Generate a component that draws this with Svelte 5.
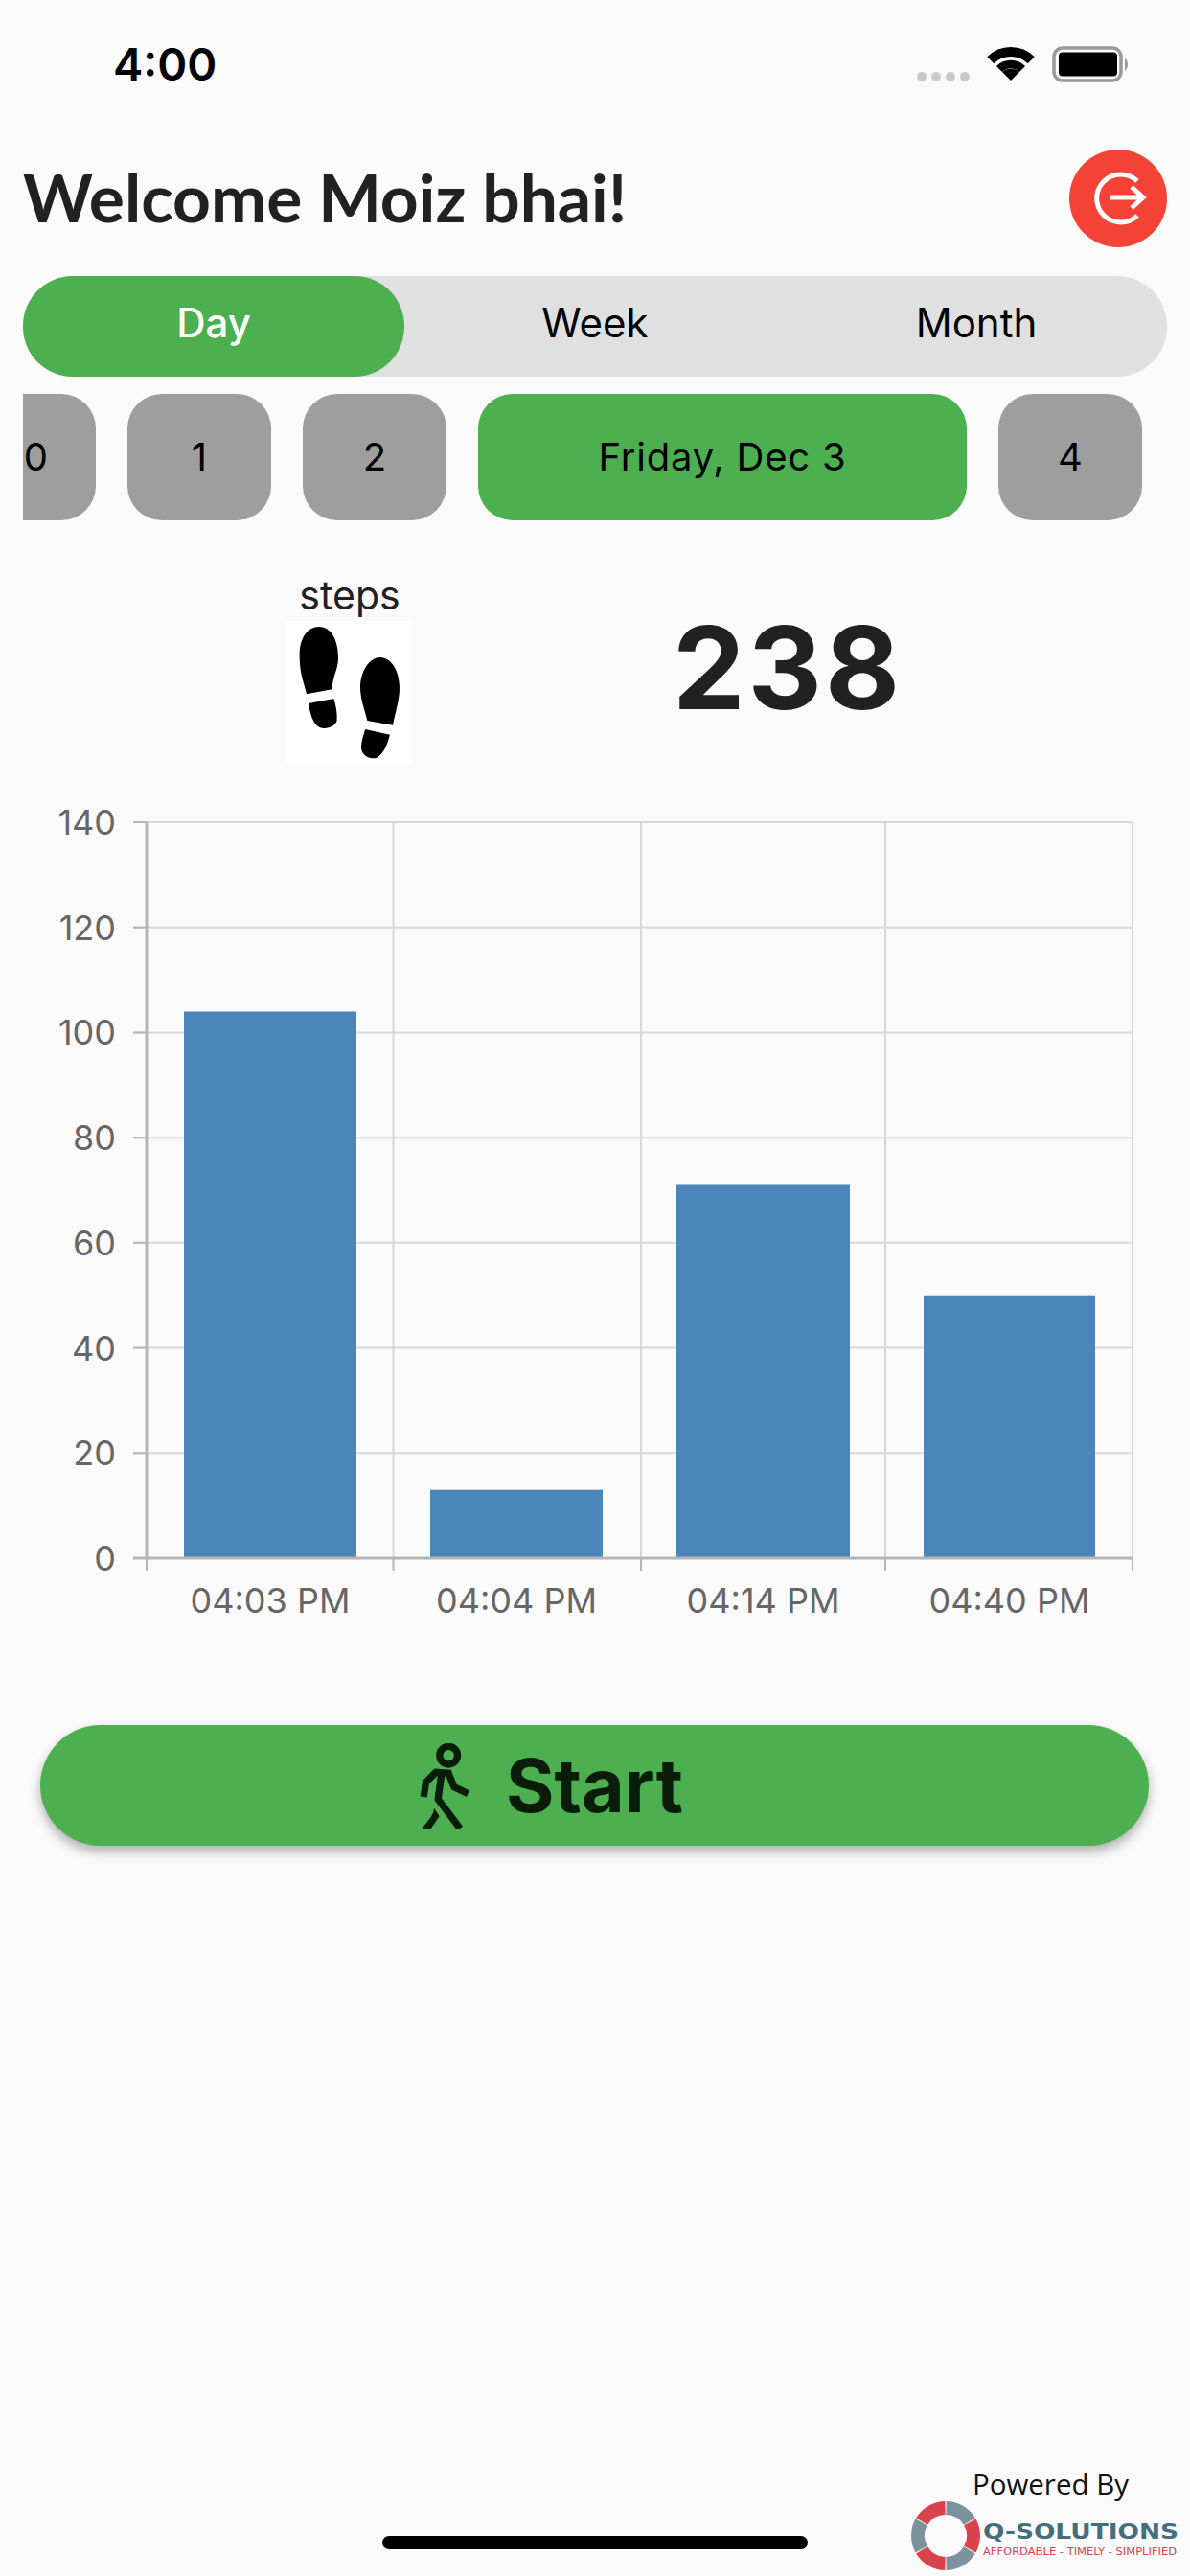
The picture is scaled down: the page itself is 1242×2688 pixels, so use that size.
<script>
	const tabs = ["Day", "Week", "Month"]
	const days = [
		{ label: "30" },
		{ label: "1" },
		{ label: "2" },
		{ label: "Friday, Dec 3", active: true },
		{ label: "4" }
	]

	// chart geometry, in page pixels
	const rightX = 1182
	const topY = 858
	const zeroY = 1626
	const maxVal = 140
	const yTicks = [0, 20, 40, 60, 80, 100, 120, 140]
	const xLines = [153, 410.5, 669, 924, 1182]
	const bars = [
		{ label: "04:03 PM", value: 104, x: 192, w: 180 },
		{ label: "04:04 PM", value: 13, x: 449, w: 180 },
		{ label: "04:14 PM", value: 71, x: 706, w: 181 },
		{ label: "04:40 PM", value: 50, x: 964, w: 179 }
	]
	const yPos = (v) => zeroY - (v / maxVal) * (zeroY - topY)

	// logo ring pieces
	const ringC = [987, 2646]
	const polar = (r, deg) => {
		const a = ((deg - 90) * Math.PI) / 180
		return [ringC[0] + r * Math.cos(a), ringC[1] + r * Math.sin(a)]
	}
	const ringPiece = (from, to) => {
		const [x1, y1] = polar(29, from)
		const [x2, y2] = polar(29, to)
		return `M${x1} ${y1}A29 29 0 0 1 ${x2} ${y2}`
	}
	const ring = [0, 1, 2, 3, 4, 5].map((i) => ({
		d: ringPiece(i * 60 + 1, i * 60 + 59),
		color: i % 2 ? "#d9434e" : "#7c939c"
	}))

	const wifiArc = (r) => {
		const d = r * Math.SQRT1_2
		return `M${1055 - d} ${84 - d}A${r} ${r} 0 0 1 ${1055 + d} ${84 - d}`
	}
</script>

<div class="page">
	<div class="status">
		<span class="time">4:00</span>
		<svg class="status_icons" viewBox="950 40 236 54" width="236" height="54">
			{#each [962, 977, 992, 1007] as cx}
				<circle {cx} cy="80" r="5" fill="#c9c9c9" />
			{/each}
			<path d={wifiArc(30)} fill="none" stroke="#000" stroke-width="10" />
			<path d={wifiArc(17)} fill="none" stroke="#000" stroke-width="8.5" />
			<path d="M1055 84L1046 75A13 13 0 0 1 1064 75Z" fill="#000" />
			<rect x="1100" y="50" width="70" height="34" rx="9" fill="none" stroke="#999" stroke-width="3.5" />
			<rect x="1105" y="54.500" width="61" height="25" rx="4" fill="#000" />
			<path d="M1174 61C1178 63 1178 71 1174 74Z" fill="#999" />
		</svg>
	</div>

	<header>
		<h1>Welcome Moiz bhai!</h1>
		<button class="logout" aria-label="Log out">
			<svg viewBox="0 0 102 102" width="102" height="102">
				<path d="M71 27A25 25 0 1 0 71 63" transform="translate(0 6)" fill="none" stroke="#fff" stroke-width="5" />
				<path d="M42 50H76M65 39L77 50L65 61" fill="none" stroke="#fff" stroke-width="5" />
			</svg>
		</button>
	</header>

	<div class="tabs">
		{#each tabs as tab, i}
			<div class="tab" class:on={i === 0}>{tab}</div>
		{/each}
	</div>

	<div class="days">
		<div class="days_track">
			{#each days as day}
				<div class="day" class:active={day.active}>{day.label}</div>
			{/each}
		</div>
	</div>

	<div class="stats">
		<div class="steps">
			<span>steps</span>
			<svg viewBox="120 205 390 448" width="130" height="150">
				<rect x="120" y="205" width="390" height="448" fill="#fff" />
				<path d="M180 433C170 390 158 370 158 310C158 255 185 222 218 222C255 222 279 260 279 320C279 355 262 375 259 418Z" />
				<path d="M186 462L265 447C272 470 276 490 275 515C270 532 250 540 232 540C205 538 192 505 186 462Z" />
				<path d="M370 516C362 480 348 450 348 410C350 355 380 318 410 318C445 318 471 360 471 415C471 450 458 490 450 530Z" />
				<path d="M363 543L441 560C432 590 425 615 400 632C385 638 352 630 351 600C352 575 358 565 363 543Z" />
			</svg>
		</div>
		<div class="count">238</div>
	</div>

	<svg class="chart" viewBox="0 840 1242 860" width="1242" height="860">
		{#each yTicks as t}
			<line x1="139" x2={t === 0 ? 153 : rightX} y1={yPos(t)} y2={yPos(t)} stroke="#d8d8d8" stroke-width="2" />
			<line x1="139" x2="153" y1={yPos(t)} y2={yPos(t)} stroke="#b5b5b5" stroke-width="2" />
			<text class="tick" x="121" y={yPos(t) + 13} text-anchor="end">{t}</text>
		{/each}
		{#each xLines as x, i}
			<line x1={x} x2={x} y1={topY} y2={zeroY} stroke={i === 0 ? "#b5b5b5" : "#d8d8d8"} stroke-width={i === 0 ? 3 : 2} />
			<line x1={x} x2={x} y1={zeroY} y2="1639" stroke="#b5b5b5" stroke-width="2" />
		{/each}
		{#each bars as bar}
			<rect x={bar.x} y={yPos(bar.value)} width={bar.w} height={zeroY - yPos(bar.value)} fill="#4a86b9" />
			<text class="tick" x={bar.x + bar.w / 2} y="1683" text-anchor="middle">{bar.label}</text>
		{/each}
		<line x1="139" x2={rightX} y1={zeroY} y2={zeroY} stroke="#b5b5b5" stroke-width="3" />
	</svg>

	<button class="start">
		<svg viewBox="115 85 155 267" width="52" height="89">
			<circle cx="205" cy="123" r="28" fill="none" stroke="currentColor" stroke-width="22" />
			<path d="M127 253L134 207L165 176L205 179L222 222L266 243M183 180L172 260L241 352" fill="none" stroke="currentColor" stroke-width="22" />
			<path d="M160 288L176 314L150 352H122L150 315C156 306 158 298 160 288Z" fill="currentColor" />
		</svg>
		<span>Start</span>
	</button>

	<footer>
		<p>Powered By</p>
		<svg viewBox="945 2608 290 76" width="290" height="76">
			{#each ring as piece}
				<path d={piece.d} fill="none" stroke={piece.color} stroke-width="14" />
			{/each}
			<path d="M994 2668L1002 2675L1003 2666Z" fill="#7c939c" />
			<text class="logo_name" x="1026" y="2649" textLength="204" lengthAdjust="spacingAndGlyphs">Q-SOLUTIONS</text>
			<text class="logo_tag" x="1026" y="2666" textLength="202" lengthAdjust="spacingAndGlyphs">AFFORDABLE - TIMELY - SIMPLIFIED</text>
		</svg>
	</footer>

	<div class="home_bar"></div>
</div>

<style>
	:global(body) {
		background: #fafafa;
	}
	.page {
		position: relative;
		width: 1242px;
		height: 2688px;
		display: flex;
		flex-direction: column;
		overflow: hidden;
		background: #fafafa;
		font-family: Inter, "Liberation Sans", sans-serif;
	}
	.status {
		height: 156px;
		flex: none;
		display: flex;
		justify-content: space-between;
		align-items: flex-start;
		padding-left: 118px;
		box-sizing: border-box;
	}
	.time {
		margin-top: 38px;
		font-size: 47px;
		line-height: 58px;
		font-weight: 600;
		color: #000;
	}
	.status_icons {
		margin-top: 40px;
		margin-right: 56px;
	}
	header {
		height: 102px;
		flex: none;
		display: flex;
		justify-content: space-between;
		align-items: center;
		padding: 0 24px;
	}
	h1 {
		margin: -4px 0 0;
		font-family: Lato, sans-serif;
		font-size: 69.500px;
		font-weight: 700;
		color: #212121;
	}
	.logout {
		width: 102px;
		height: 102px;
		padding: 0;
		border: none;
		border-radius: 50%;
		background: #f44336;
	}
	.logout svg {
		display: block;
	}
	.tabs {
		margin: 30px 24px 0;
		height: 105px;
		flex: none;
		display: grid;
		grid-template-columns: repeat(3, 1fr);
		border-radius: 52px;
		background: #e0e0e0;
	}
	.tab {
		display: flex;
		align-items: center;
		justify-content: center;
		padding-bottom: 8px;
		box-sizing: border-box;
		font-size: 42px;
		font-weight: 400;
		color: #000;
		border-radius: 52px;
	}
	.tab.on {
		background: #4caf50;
		color: #fff;
		font-weight: 500;
	}
	.days {
		margin: 18px 24px 0;
		height: 132px;
		flex: none;
		overflow: hidden;
	}
	.days_track {
		display: flex;
		gap: 33px;
		margin-left: -74px;
	}
	.day {
		width: 150px;
		height: 132px;
		flex: none;
		display: flex;
		align-items: center;
		justify-content: center;
		padding-bottom: 2px;
		box-sizing: border-box;
		border-radius: 36px;
		background: #9e9e9e;
		font-size: 40px;
		color: #000;
	}
	.day.active {
		width: 510px;
		background: #4caf50;
		letter-spacing: 0.8px;
	}
	.stats {
		height: 297px;
		flex: none;
		display: flex;
		align-items: flex-start;
		padding-left: 300px;
		box-sizing: border-box;
	}
	.steps {
		width: 130px;
		margin-top: 58px;
		display: flex;
		flex-direction: column;
		align-items: center;
		color: #212121;
	}
	.steps span {
		font-size: 41px;
		line-height: 40px;
		margin-bottom: 7px;
	}
	.steps svg {
		display: block;
	}
	.count {
		margin-left: 272px;
		margin-top: 84px;
		font-size: 120px;
		line-height: 140px;
		font-weight: 700;
		letter-spacing: 3px;
		color: #212121;
	}
	.chart {
		display: block;
		flex: none;
	}
	.tick {
		font-size: 36px;
		fill: #666;
	}
	.start {
		margin: 100px 43px 0 42px;
		height: 126px;
		flex: none;
		display: flex;
		align-items: center;
		justify-content: center;
		gap: 38px;
		padding: 0 90px 0 0;
		border: none;
		border-radius: 63px;
		background: #4caf50;
		color: #0a1c0a;
		font-family: inherit;
		font-size: 77px;
		font-weight: 700;
		box-shadow: 0 6px 12px rgba(0, 0, 0, 0.3);
	}
	footer {
		margin-top: auto;
		margin-right: 7px;
		margin-bottom: 4px;
		display: flex;
		flex-direction: column;
		align-items: flex-end;
	}
	footer p {
		margin: 0 57px 0 0;
		font-family: "Open Sans", sans-serif;
		font-size: 29.500px;
		line-height: 32px;
		color: #111;
	}
	footer svg {
		display: block;
	}
	.logo_name {
		font-family: "DejaVu Sans", sans-serif;
		font-size: 21px;
		fill: #456e7c;
		font-weight: 700;
	}
	.logo_tag {
		font-family: "DejaVu Sans", sans-serif;
		font-size: 10px;
		fill: #d9434e;
	}
	.home_bar {
		position: absolute;
		left: 399px;
		bottom: 28px;
		width: 444px;
		height: 14px;
		border-radius: 7px;
		background: #000;
	}
</style>
